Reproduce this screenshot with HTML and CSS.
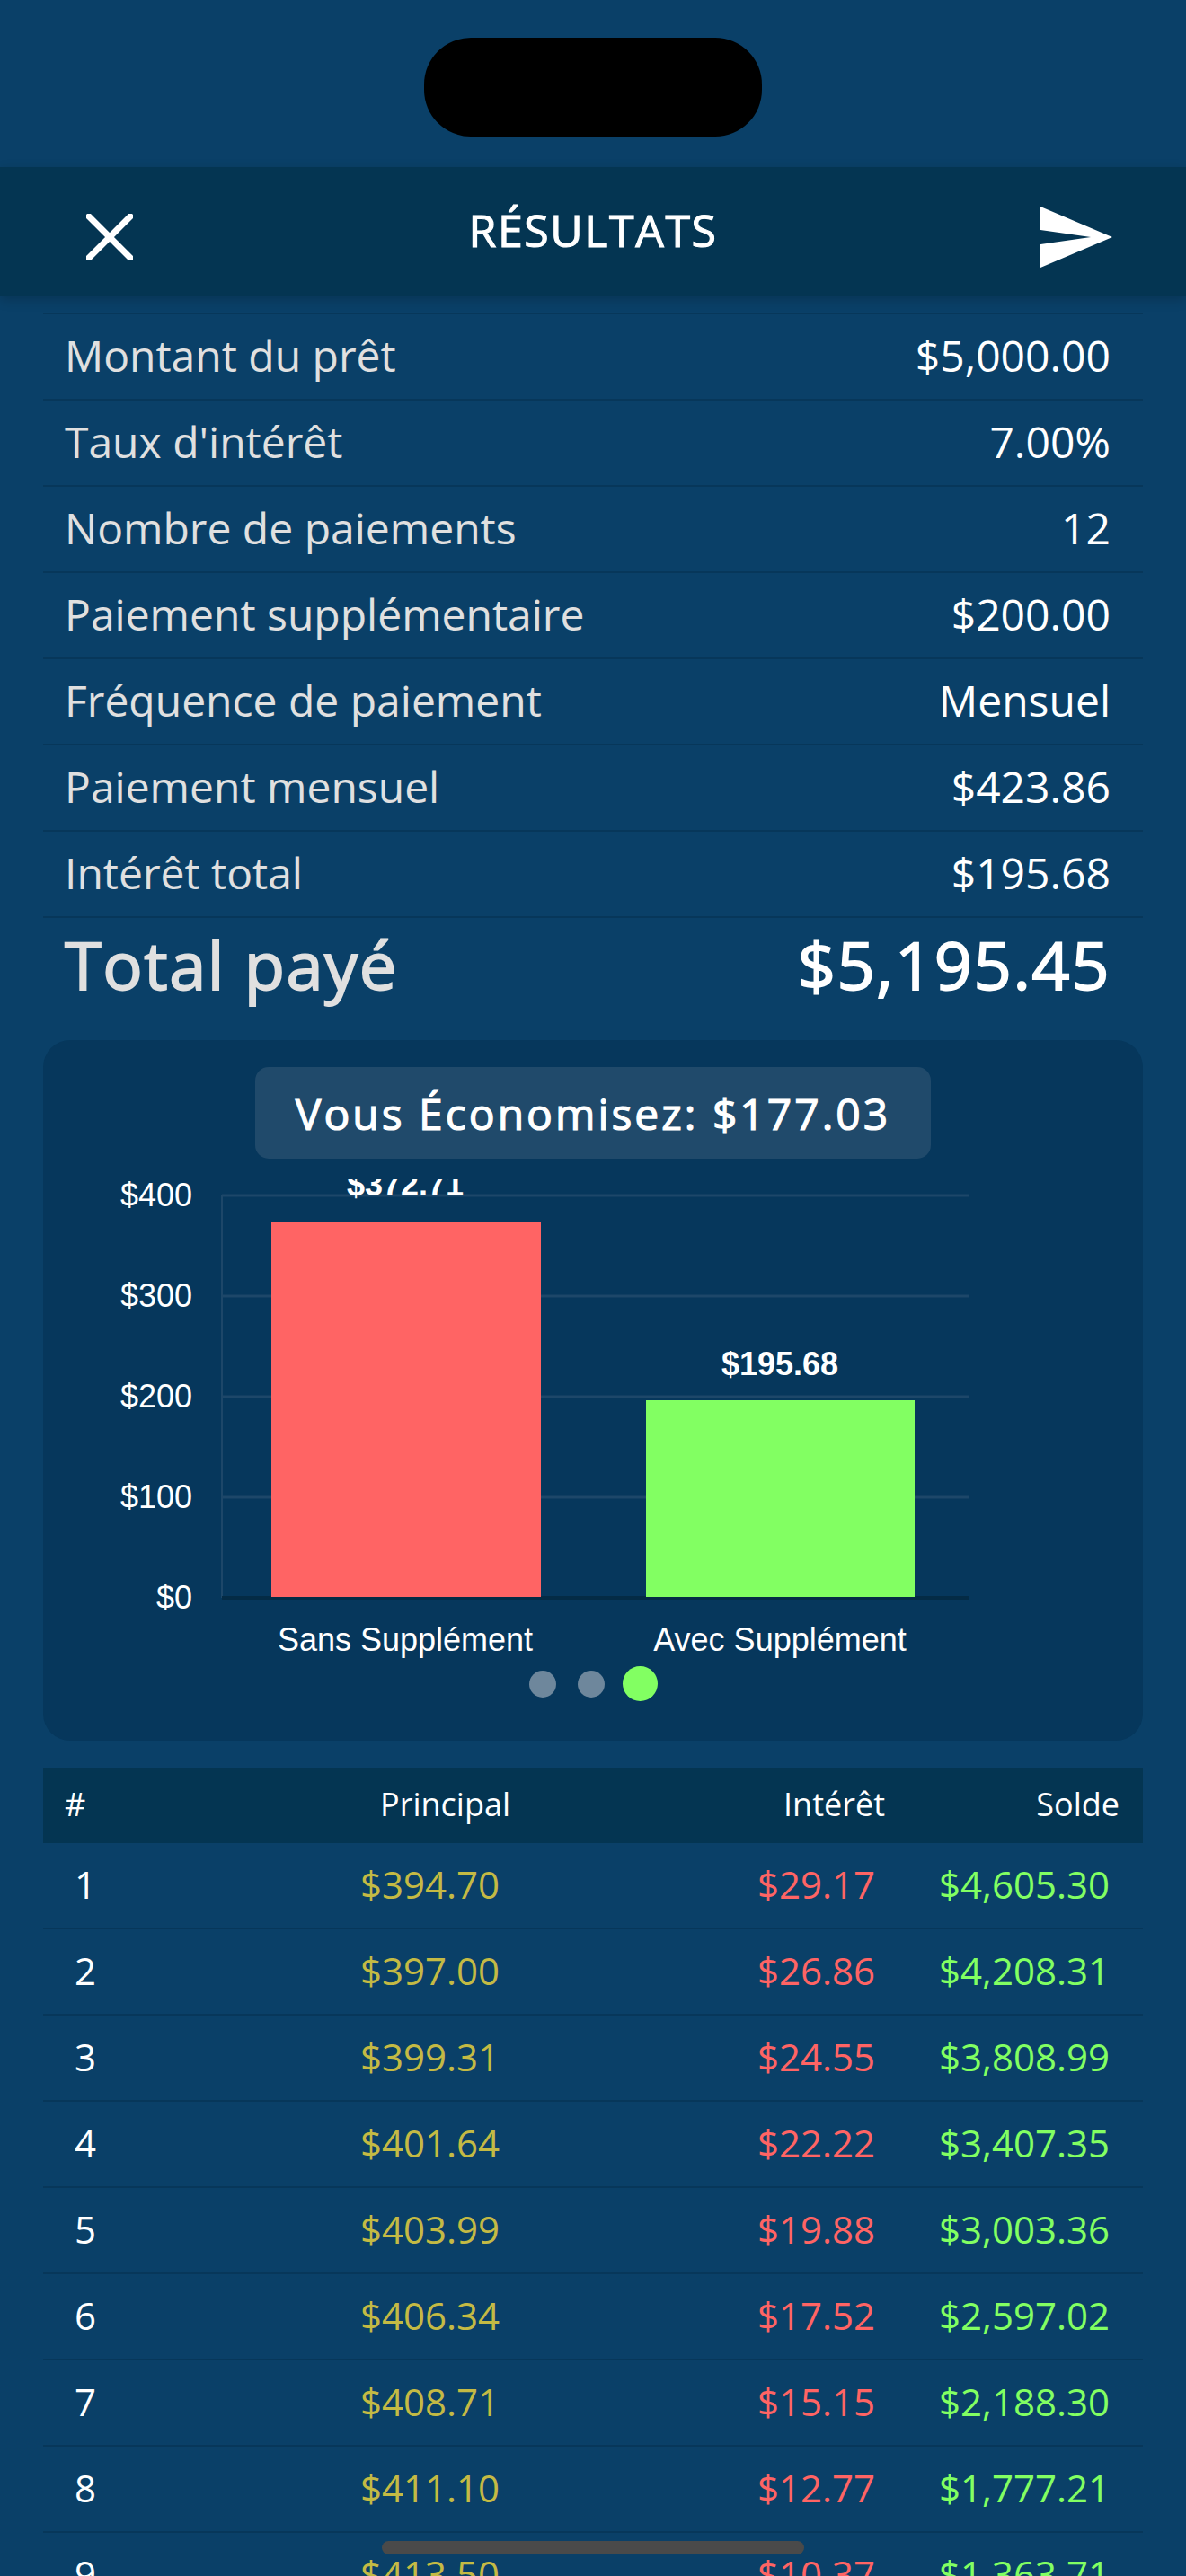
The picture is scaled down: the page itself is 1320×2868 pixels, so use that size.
FILE: index.html
```html
<!DOCTYPE html>
<html lang="fr">
<head>
<meta charset="utf-8">
<title>Résultats</title>
<link rel="stylesheet" href="styles.css">
</head>
<body>
<div class="app">
  <div class="status"><div class="notch"></div></div>
  <header class="topbar">
    <div class="side"><svg class="icon-close" width="52" height="52" viewBox="0 0 52 52"><path d="M3 3L49 49M49 3L3 49" stroke="#fff" stroke-width="7" stroke-linecap="square" fill="none"/></svg></div>
    <h1 class="title">RÉSULTATS</h1>
    <div class="side side-right"><svg class="icon-send" width="80" height="68" viewBox="0 0 80 68"><path d="M0 0L80 34L0 68V42L56 34L0 26Z" fill="#fff"/></svg></div>
  </header>
  <main class="content">
    <section class="summary">
      <div class="row"><span class="label">Montant du prêt</span><span class="value">$5,000.00</span></div>
      <div class="row"><span class="label">Taux d'intérêt</span><span class="value">7.00%</span></div>
      <div class="row"><span class="label">Nombre de paiements</span><span class="value">12</span></div>
      <div class="row"><span class="label">Paiement supplémentaire</span><span class="value">$200.00</span></div>
      <div class="row"><span class="label">Fréquence de paiement</span><span class="value">Mensuel</span></div>
      <div class="row"><span class="label">Paiement mensuel</span><span class="value">$423.86</span></div>
      <div class="row"><span class="label">Intérêt total</span><span class="value">$195.68</span></div>
      <div class="row-total"><span class="total-label">Total payé</span><span class="total-value">$5,195.45</span></div>
    </section>
    <section class="card">
      <div class="badge">Vous Économisez: $177.03</div>
      <svg class="chart" width="1224" height="537" viewBox="48 1313 1224 537">
        <g class="grid">
          <path d="M247 1331H1079M247 1443H1079M247 1555H1079M247 1667H1079"/>
          <path class="grid-v" d="M247 1331V1779"/>
        </g>
        <path class="axis" d="M247 1779H1079"/>
        <rect x="302" y="1361" width="300" height="417" fill="#ff6464"/>
        <rect x="719" y="1559" width="299" height="219" fill="#82ff62"/>
        <g class="ticks">
          <text x="214" y="1343">$400</text>
          <text x="214" y="1455">$300</text>
          <text x="214" y="1567">$200</text>
          <text x="214" y="1679">$100</text>
          <text x="214" y="1791">$0</text>
        </g>
        <g class="bar-values">
          <text x="451" y="1331">$372.71</text>
          <text x="868" y="1531">$195.68</text>
        </g>
        <g class="bar-names">
          <text x="451" y="1838">Sans Supplément</text>
          <text x="868" y="1838">Avec Supplément</text>
        </g>
      </svg>
      <div class="dots"><span class="dot"></span><span class="dot"></span><span class="dot dot-active"></span></div>
    </section>
    <section class="table">
      <div class="thead"><span>#</span><span>Principal</span><span>Intérêt</span><span>Solde</span></div>
      <div class="tr"><span class="n">1</span><span class="p">$394.70</span><span class="i">$29.17</span><span class="s">$4,605.30</span></div>
      <div class="tr"><span class="n">2</span><span class="p">$397.00</span><span class="i">$26.86</span><span class="s">$4,208.31</span></div>
      <div class="tr"><span class="n">3</span><span class="p">$399.31</span><span class="i">$24.55</span><span class="s">$3,808.99</span></div>
      <div class="tr"><span class="n">4</span><span class="p">$401.64</span><span class="i">$22.22</span><span class="s">$3,407.35</span></div>
      <div class="tr"><span class="n">5</span><span class="p">$403.99</span><span class="i">$19.88</span><span class="s">$3,003.36</span></div>
      <div class="tr"><span class="n">6</span><span class="p">$406.34</span><span class="i">$17.52</span><span class="s">$2,597.02</span></div>
      <div class="tr"><span class="n">7</span><span class="p">$408.71</span><span class="i">$15.15</span><span class="s">$2,188.30</span></div>
      <div class="tr"><span class="n">8</span><span class="p">$411.10</span><span class="i">$12.77</span><span class="s">$1,777.21</span></div>
      <div class="tr"><span class="n">9</span><span class="p">$413.50</span><span class="i">$10.37</span><span class="s">$1,363.71</span></div>
    </section>
  </main>
  <div class="home-bar"></div>
</div>
</body>
</html>
```
FILE: styles.css
```css
* { box-sizing: border-box; margin: 0; padding: 0; }
html, body { height: 100%; }
body {
  background: #0a4068;
  font-family: "Open Sans", "Noto Sans", sans-serif;
  color: #fff;
  overflow: hidden;
}
.app { position: relative; width: 1320px; height: 2868px; overflow: hidden; background: #0a4068; }

.status { height: 186px; padding-top: 42px; display: flex; justify-content: center; }
.notch { width: 376px; height: 110px; background: #000; border-radius: 52px; }

.topbar {
  position: relative;
  height: 144px;
  background: #043552;
  box-shadow: 0 4px 12px rgba(0, 0, 0, 0.18);
  display: flex;
  align-items: center;
  justify-content: space-between;
  padding: 0 82px 0 96px;
}
.side { flex: 1; display: flex; }
.side-right { justify-content: flex-end; }
.icon-close { margin-top: 12px; }
.icon-send { margin-top: 12px; }
.title {
  font-size: 50px;
  font-weight: 400;
  -webkit-text-stroke: 1.1px #fff;
  letter-spacing: 1.6px;
  margin-top: -4px;
  margin-right: 14px;
}

.content { padding: 18px 48px 0; }

.summary { display: flex; flex-direction: column; }
.row {
  height: 96px;
  display: flex;
  align-items: center;
  justify-content: space-between;
  padding: 0 36px 3px 24px;
  border-top: 2px solid #07375a;
  font-size: 48px;
}
.label { color: #e0e0e0; }
.value { color: #fff; }
.row-total {
  height: 120px;
  padding: 0 36px 16px 24px;
  border-top: 2px solid #07375a;
  display: flex;
  align-items: center;
  justify-content: space-between;
  font-size: 74px;
  letter-spacing: 1.5px;
}
.total-label { color: #e0e0e0; -webkit-text-stroke: 1.8px #e0e0e0; }
.total-value { color: #fff; -webkit-text-stroke: 1.8px #fff; }

.card {
  margin-top: 18px;
  height: 780px;
  background: #06375c;
  border-radius: 30px;
  padding-top: 30px;
  display: flex;
  flex-direction: column;
  align-items: center;
}
.badge {
  width: 752px;
  height: 102px;
  background: #204a6b;
  border-radius: 15px;
  display: flex;
  align-items: center;
  justify-content: center;
  font-size: 48px;
  font-weight: 400;
  -webkit-text-stroke: 1.2px #fff;
  letter-spacing: 3px;
}
.chart { display: block; margin-top: 23px; flex: none; }
.grid path { stroke: #1d4769; stroke-width: 3; fill: none; }
.grid .grid-v { stroke-width: 2; }
.axis { stroke: #042b45; stroke-width: 4; fill: none; }
.chart text { font-family: "Liberation Sans", Arial, sans-serif; font-size: 36px; fill: #fff; }
.ticks text { text-anchor: end; }
.bar-values text { text-anchor: middle; font-weight: 700; }
.bar-names text { text-anchor: middle; }

.dots { display: flex; align-items: center; justify-content: center; gap: 24px; height: 39px; margin-top: 5px; }
.dot { width: 30px; height: 30px; border-radius: 50%; background: #6e879c; }
.dot-active { width: 39px; height: 39px; background: #82ff62; margin-left: -4px; }

.table { margin-top: 30px; }
.thead {
  height: 84px;
  background: #043552;
  display: grid;
  grid-template-columns: 96px 400px 417px 1fr;
  align-items: center;
  padding: 0 26px 3px 24px;
  font-size: 36px;
}
.thead span { text-align: right; }
.thead span:first-child { text-align: left; }
.tr {
  height: 96px;
  display: grid;
  grid-template-columns: 46px 438px 418px 1fr;
  align-items: center;
  padding: 0 37px 3px 24px;
  font-size: 42px;
  border-bottom: 2px solid #07375a;
}
.n { text-align: center; color: #fff; }
.p { text-align: right; color: #c4ba44; }
.i { text-align: right; color: #ff6464; }
.s { text-align: right; color: #82ff62; }

.home-bar {
  position: absolute;
  left: 425px;
  top: 2829px;
  width: 470px;
  height: 15px;
  background: #4a4a4a;
  border-radius: 8px;
}
```
